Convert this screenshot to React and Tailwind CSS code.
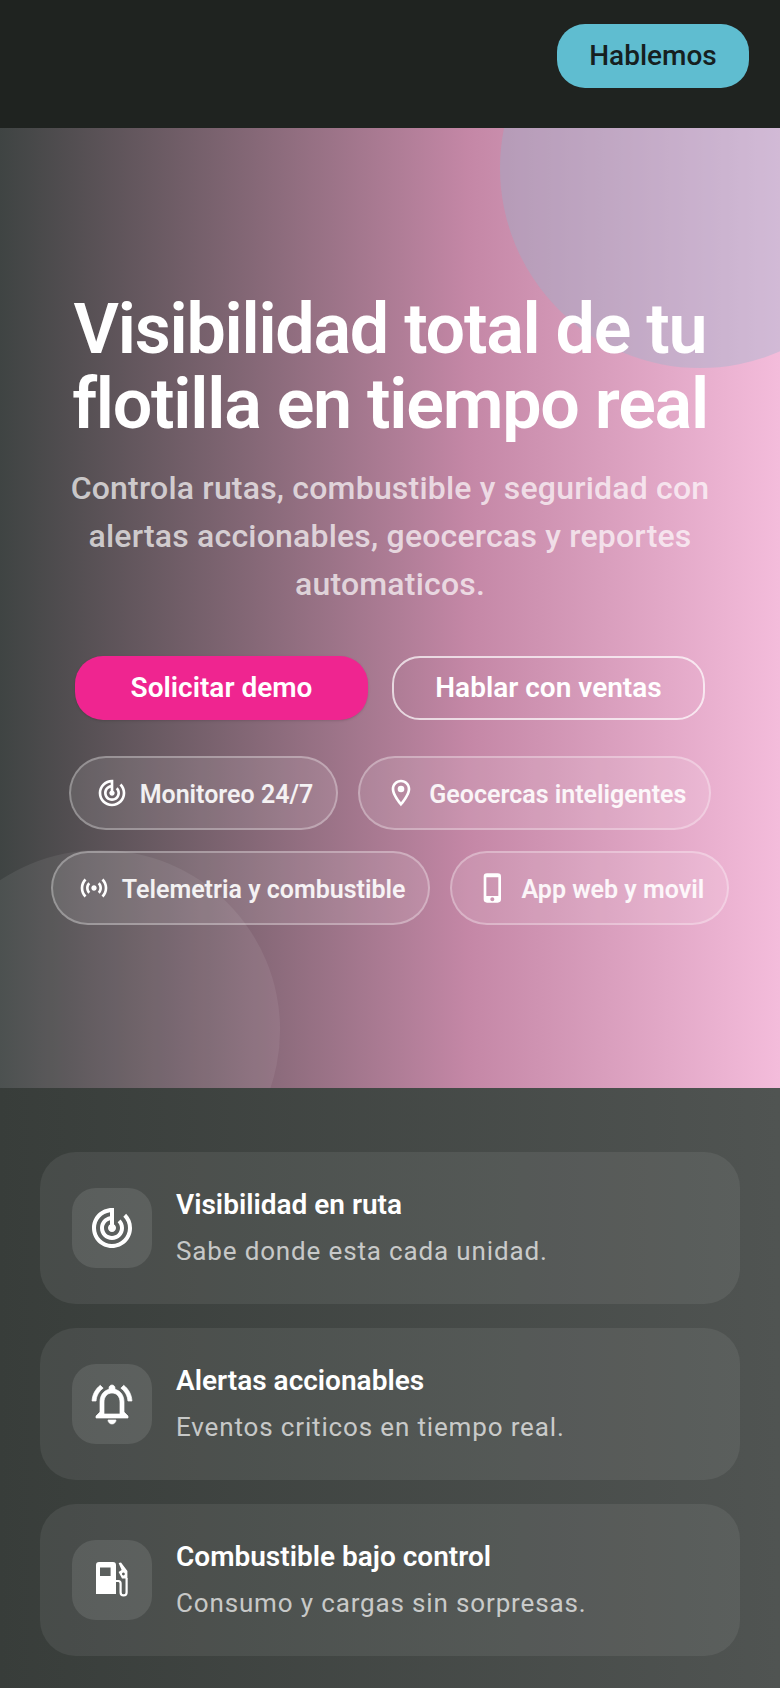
import { MdOutlineTrackChanges, MdOutlineLocationOn, MdOutlineSensors, MdOutlinePhoneIphone } from 'react-icons/md';

const BellIcon = ({ className }) => (
  <svg viewBox="0 0 24 24" className={className} fill="currentColor" stroke="currentColor" strokeWidth="0.35">
    <path d="M7.58 4.08 6.15 2.65C3.75 4.48 2.17 7.3 2.03 10.5h2c.15-2.65 1.51-4.97 3.55-6.42zm12.39 6.42h2c-.15-3.2-1.73-6.02-4.12-7.85l-1.42 1.43c2.02 1.45 3.39 3.77 3.54 6.42zM18 11c0-3.07-1.64-5.64-4.5-6.32V4c0-.83-.67-1.5-1.5-1.5s-1.5.67-1.5 1.5v.68C7.63 5.36 6 7.92 6 11v5l-2 2v1h16v-1l-2-2v-5zm-2 6H8v-6c0-2.48 1.51-4.5 4-4.5s4 2.02 4 4.5v6zm-4 5c1.1 0 2-.9 2-2h-4c0 1.1.9 2 2 2z" />
  </svg>
);

const FuelIcon = ({ className }) => (
  <svg viewBox="0 0 24 24" className={className} fill="currentColor">
    <path fillRule="evenodd" d="M5.5 3H12.5a1.5 1.5 0 0 1 1.5 1.5V19H4V4.5A1.5 1.5 0 0 1 5.5 3ZM6 5.7V10H11.3V5.7Z" />
    <path fillRule="evenodd" d="M15.3 3.5 16.5 3.2 19.7 7.5V11.2H17L15.3 8 16.8 7ZM17.7 8.3a.7.7 0 1 0 .01 0Z" />
    <path d="M14 12.5H15.2Q16.3 12.5 16.3 13.8V18.2A1.5 1.5 0 0 0 19.3 18.2V11" fill="none" stroke="currentColor" strokeWidth="1.1" />
  </svg>
);

const chips = [
  { icon: MdOutlineTrackChanges, label: 'Monitoreo 24/7' },
  { icon: MdOutlineLocationOn, label: 'Geocercas inteligentes' },
  { icon: MdOutlineSensors, label: 'Telemetria y combustible' },
  { icon: MdOutlinePhoneIphone, label: 'App web y movil' },
];

const cards = [
  { icon: MdOutlineTrackChanges, title: 'Visibilidad en ruta', text: 'Sabe donde esta cada unidad.' },
  { icon: BellIcon, title: 'Alertas accionables', text: 'Eventos criticos en tiempo real.' },
  { icon: FuelIcon, title: 'Combustible bajo control', text: 'Consumo y cargas sin sorpresas.' },
];

const App = () => {
  return (
    <div className="h-[1688px] overflow-hidden bg-[#3a3f3c] font-['Roboto',sans-serif] text-white">
      <header className="h-[128px] bg-[#1f2320] flex justify-end items-start pt-6 pr-[31px]">
        <button className="w-[192px] h-[64px] rounded-[28px] bg-[#5fbdd0] text-[#16201f] text-[28px] font-medium">
          Hablemos
        </button>
      </header>

      <section className="relative h-[960px] overflow-hidden bg-gradient-to-r from-[#3f4443] via-[#c487a6] via-60% to-[#f4bcdb] flex flex-col items-center pt-[164px]">
        <div className="absolute left-[500px] top-[-160px] w-[400px] h-[400px] rounded-full bg-[#92b7cd]/35"></div>
        <div className="absolute left-[-80px] top-[722px] w-[360px] h-[360px] rounded-full bg-white/[0.07]"></div>

        <h1 className="relative text-[70px] leading-[75px] font-semibold text-center tracking-[-1.25px] w-[660px]">
          Visibilidad total de tu flotilla en tiempo real
        </h1>
        <p className="relative mt-[22px] text-[32px] leading-[48px] font-medium text-center tracking-[0.2px] text-white/70 w-[670px]">
          Controla rutas, combustible y seguridad con alertas accionables, geocercas y reportes automaticos.
        </p>

        <div className="relative mt-[48px] flex gap-6">
          <button className="w-[293px] h-[64px] rounded-[28px] bg-[#ef2590] text-[28px] font-semibold shadow-sm">
            Solicitar demo
          </button>
          <button className="w-[313px] h-[64px] rounded-[28px] border-2 border-white/70 text-[28px] font-semibold">
            Hablar con ventas
          </button>
        </div>

        <div className="relative mt-9 w-[700px] flex flex-wrap justify-center gap-x-5 gap-y-[21px]">
          {chips.map((chip) => {
            const Icon = chip.icon;
            return (
              <div key={chip.label} className="h-[74px] pl-[25px] pr-[23px] flex items-center gap-3 rounded-full border-2 border-white/30 bg-white/10 text-[25px] font-semibold text-white/90">
                <Icon className="w-8 h-8 text-white" />
                <span className="pt-1">{chip.label}</span>
              </div>
            );
          })}
        </div>
      </section>

      <section className="px-10 pt-[64px] h-[600px] flex flex-col gap-6 bg-gradient-to-r from-[#383d3a] to-[#505452]">
        {cards.map((card) => {
          const Icon = card.icon;
          return (
            <div key={card.title} className="h-[152px] rounded-[36px] bg-white/[0.07] flex items-start gap-6 pl-8 pt-9">
              <div className="w-[80px] h-[80px] rounded-3xl bg-white/10 flex items-center justify-center">
                <Icon className="w-12 h-12 text-white" />
              </div>
              <div>
                <div className="text-[28px] leading-[36px] font-semibold -mt-[1px]">{card.title}</div>
                <div className="mt-[10px] text-[26px] leading-[36px] tracking-[0.85px] text-white/70">{card.text}</div>
              </div>
            </div>
          );
        })}
      </section>
    </div>
  );
};

export default App;
